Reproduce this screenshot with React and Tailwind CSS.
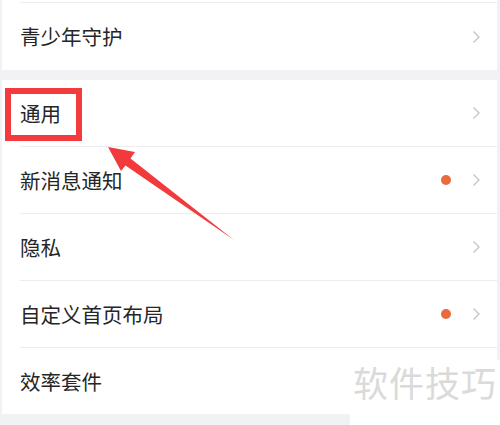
import React from 'react';

const Chevron = () => (
  <svg width="9" height="14" viewBox="0 0 9 14" className="block">
    <path d="M1.5 1.5 L7 7 L1.5 12.5" fill="none" stroke="#c4c4c4" strokeWidth="1.3" />
  </svg>
);

const Row = ({ label, dot, divider }) => (
  <div className="flex flex-col">
    <div className="flex items-center h-[66px] pl-[18px] pr-[16px]">
      <span className="flex-1 text-[20.5px] leading-none text-[#262626]">{label}</span>
      {dot && <span className="w-[10px] h-[10px] rounded-full bg-[#e96a3d] mr-[21px]" />}
      <Chevron />
    </div>
    {divider && <div className="ml-[18px] h-px bg-[#ececec]" />}
  </div>
);

export default function App() {
  const items = [
    { label: '通用' },
    { label: '新消息通知', dot: true },
    { label: '隐私' },
    { label: '自定义首页布局', dot: true },
    { label: '效率套件' },
  ];

  return (
    <div
      className="relative w-[500px] h-[425px] overflow-hidden bg-[#f2f2f5] pl-[2px] pr-[3px]"
      style={{ fontFamily: '"Noto Sans CJK SC", "Noto Sans", sans-serif' }}
    >
      <div className="bg-white">
        <div className="h-[2px]" />
        <div className="ml-[18px] h-px bg-[#ececec]" />
        <div className="flex items-center h-[67px] pl-[18px] pr-[16px]">
          <span className="flex-1 text-[20.5px] leading-none text-[#262626]">青少年守护</span>
          <Chevron />
        </div>
      </div>
      <div className="h-[10px]" />
      <div className="bg-white">
        {items.map((it, i) => (
          <Row key={it.label} label={it.label} dot={it.dot} divider={i < items.length - 1} />
        ))}
      </div>

      {/* red highlight box */}
      <div className="absolute left-[5px] top-[88px] w-[77px] h-[53px] border-[6px] border-[#f33a3c]" />

      {/* arrow */}
      <svg className="absolute left-0 top-0" width="500" height="425" viewBox="0 0 500 425">
        <polygon
          points="108,147 135,152 130.5,158.5 234,240 125.5,165.5 121,171"
          fill="#f2393b"
        />
      </svg>

      {/* watermark */}
      <div className="absolute left-[350px] top-[360px] w-[150px] h-[65px] bg-white flex items-start pt-[4px] pl-[3px]">
        <span className="text-[35px] leading-none tracking-[1px] text-[#dadada]">软件技巧</span>
      </div>
    </div>
  );
}
